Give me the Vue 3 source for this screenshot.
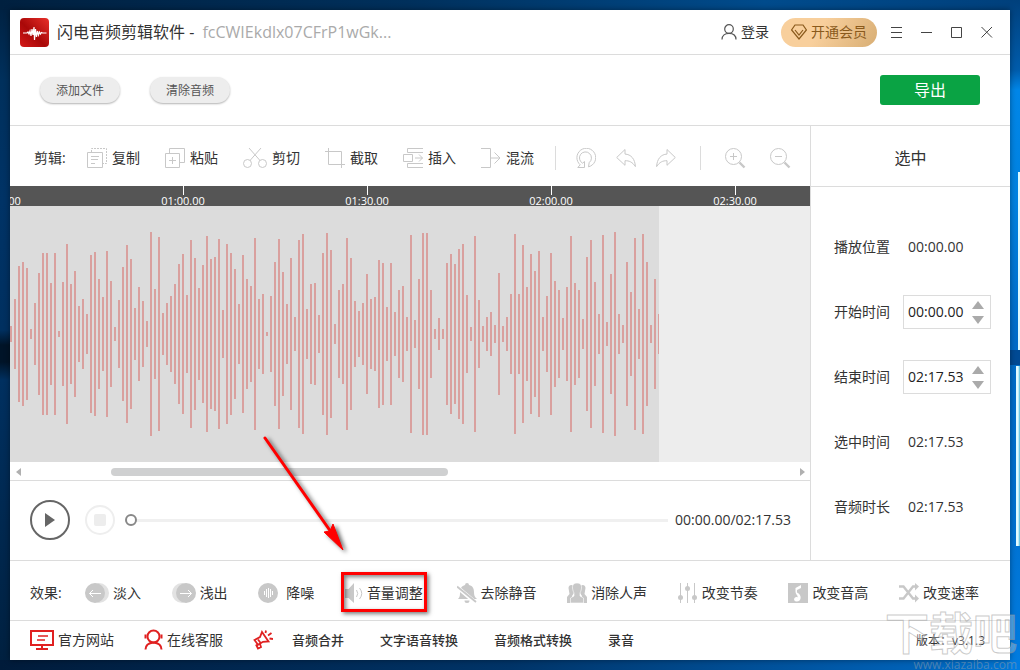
<script setup>
import { ref, computed } from 'vue';

const fileName = ref('fcCWIEkdlx07CFrP1wGk...');
const startTime = ref('00:00.00');
const endTime = ref('02:17.53');
const duration = ref('02:17.53');
const position = ref('00:00.00');
const progress = ref(0);

// edit tools
const editTools = [
  {
    label: '复制', width: 20,
    icon: '<path d="M.5 4.5h15v15H.5zM4 8.5h8M4 11.5h7M4 15.5h4"/><path stroke-dasharray="2 1" d="M4.5 4V.5h15v15H16"/>',
  },
  {
    label: '粘贴', width: 20,
    icon: '<path d="M.5 5.5h14v14H.5zM4.5 5V.5h15v14H15M7.5 9v7M4 12.5h7"/>',
  },
  {
    label: '剪切', width: 24,
    icon: '<circle cx="4.5" cy="15.5" r="4"/><circle cx="19.5" cy="15.5" r="4"/><path d="M6 0l11 12.5M18 0L7 12.5"/>',
  },
  {
    label: '截取', width: 20,
    icon: '<path d="M0 3.5h16.5V20M3.5 0v16.5H20"/>',
  },
  {
    label: '插入', width: 20,
    icon: '<path d="M20 .5H4.5v4H20M20 19.5H4.5v-4H20M.5 6.5h9v7h-9zM12 10h7.5M16 6.5l3.5 3.5-3.5 3.5"/>',
  },
  {
    label: '混流', width: 20,
    icon: '<path d="M0 .5h9.5v19H0M9.5 10H19M13.5 4.5L19 10l-5.5 5.5"/>',
  },
];

const historyTools = [
  { label: '还原', icon: '<path d="M12.5 18.8A9.4 9.4 0 1 0 4.2 16.8L1.8 19.5H8.5V13.5L6.6 15.2A6 6 0 1 1 13.2 14.6z"/>' },
  { label: '撤销', icon: '<path d="M.7 9.5L9 1.5v4.6C15 6.3 19 11 19.4 18.6 16.5 14 13 12.6 9 12.7v4.6z"/>' },
  { label: '重做', icon: '<path d="M19.3 9.5L11 1.5v4.6C5 6.3 1 11 .6 18.6 3.5 14 7 12.6 11 12.7v4.6z"/>' },
];

const zoomTools = [
  { label: '放大', icon: '<circle cx="8.5" cy="8.5" r="8"/><path d="M8.5 5v7M5 8.5h7"/><path stroke-width="2.4" d="M14.5 14.5l5 5"/>' },
  { label: '缩小', icon: '<circle cx="8.5" cy="8.5" r="8"/><path d="M5 8.5h7"/><path stroke-width="2.4" d="M14.5 14.5l5 5"/>' },
];

// effects
const effects = [
  {
    label: '淡入', width: 24,
    icon: '<circle cx="14" cy="10" r="10" fill="#e2e2e2"/><circle cx="10" cy="10" r="10"/><path d="M16 10.5H4.5M8 7l-3.5 3.5L8 14" fill="none" stroke="#fff"/>',
  },
  {
    label: '浅出', width: 24,
    icon: '<circle cx="10" cy="10" r="10" fill="#e2e2e2"/><circle cx="14" cy="10" r="10"/><path d="M8 10.5h11.5M16 7l3.5 3.5L16 14" fill="none" stroke="#fff"/>',
  },
  {
    label: '降噪', width: 24,
    icon: '<circle cx="10" cy="10" r="10"/><path d="M6.5 8v4M8.5 6v8M10.5 5v10M12.5 6v8M14.5 8v4" stroke="#fff"/>',
  },
  {
    label: '音量调整', width: 18, marked: true,
    icon: '<path d="M0 6h3.5L9 0v20l-5.5-5H0z"/><path d="M11.5 7q2.5 3.500 0 7M14.500 5q4.500 5.500 0 11" fill="none" stroke="#c8c8c8"/>',
  },
  {
    label: '去除静音', width: 20,
    icon: '<path d="M10 0a2 2 0 0 1 2 2c4 1 5 4 5 7 0 4 1 5 3 7H1c2-2 2-4 2-7 0-4 2-6 5-7a2 2 0 0 1 2-2zM7.500 17.500h5a2.500 2.500 0 0 1-5 0z"/><path d="M0 4l19 16" stroke="#fff" stroke-width="4"/><path d="M0 3.500L19 19" stroke="#c8c8c8" stroke-width="1.800"/>',
  },
  {
    label: '消除人声', width: 20,
    icon: '<path d="M1.500 5c0-4 5.500-4 5.500 0v5l-2 3v7H0v-6l2.500-3zM18.500 5c0-4-5.500-4-5.500 0v5l2 3v7h5v-6l-2.500-3z"/><path d="M10 0c6 0 5 6 3 10v3l3.500 2v5h-13v-5L7 13v-3C5 6 4 0 10 0z" stroke="#fff" stroke-width=".6"/>',
  },
  {
    label: '改变节奏', width: 20,
    icon: '<path d="M2.500 0v20M9.500 0v20M16.500 0v20" stroke="#c8c8c8"/><circle cx="2.500" cy="14.500" r="2.500"/><circle cx="9.500" cy="5.500" r="2.500"/><circle cx="16.500" cy="14.500" r="2.500"/>',
  },
  {
    label: '改变音高', width: 20,
    icon: '<path d="M0 0h20v20H0z"/><path d="M7.500 5l5.500-3v3l-4 2v2.500c5 2 5 9-.5 9-3.500 0-3-5 .500-4.500l.5.500c1-2-2-3-2-6z" fill="#fff"/>',
  },
  {
    label: '改变速率', width: 20,
    icon: '<path d="M0 3.500h4.500L14 15.500h3M0 15.500h4.500L14 3.500h3" fill="none" stroke="#c8c8c8" stroke-width="2.400"/><path d="M16 0l4 3.500L16 7.500zM16 11.500l4 4-4 4z"/>',
  },
];

const links = ['音频合并', '文字语音转换', '音频格式转换', '录音'];

const marks = ['00:30.00', '01:00.00', '01:30.00', '02:00.00', '02:30.00'];

// 波形半高
const peaks = [
  8, 35, 68, 72, 66, 5, 31, 61, 81, 81, 51, 81, 3, 52, 90, 50, 63, 28, 35, 20, 79, 82, 55, 37, 83, 53, 7, 34,
  67, 89, 75, 26, 47, 33, 13, 102, 45, 97, 21, 31, 38, 50, 70, 80, 39, 94, 76, 46, 69, 98, 75, 77, 95, 24, 90,
  81, 65, 30, 79, 55, 48, 96, 35, 40, 2, 38, 72, 95, 62, 30, 76, 17, 94, 100, 25, 50, 51, 19, 81, 101, 84, 10,
  44, 50, 96, 76, 33, 23, 31, 60, 35, 37, 74, 71, 27, 71, 22, 44, 48, 17, 99, 14, 55, 101, 101, 44, 5, 16, 5,
  71, 80, 70, 85, 90, 39, 7, 98, 34, 8, 17, 22, 9, 61, 8, 17, 40, 100, 40, 89, 47, 80, 63, 83, 17, 38, 81, 53,
  44, 16, 47, 98, 51, 44, 15, 77, 94, 52, 20, 99, 12, 60, 102, 20, 9, 72, 42, 96, 25, 100, 72, 9, 55, 20,
];

const bars = computed(() => peaks.map((h, i) => ({ x: i * 4, y: 128 - h, h: h * 2 })));
</script>

<template>
  <div class="desktop">
    <div class="window">
      <!-- title bar -->
      <header class="titlebar">
        <svg class="logo" viewBox="0 0 29 29">
          <defs>
            <linearGradient id="logoFill" x1="1" y1="0" x2="0" y2="1">
              <stop offset="0" stop-color="#e8302a" />
              <stop offset=".55" stop-color="#a90808" />
              <stop offset="1" stop-color="#d51a18" />
            </linearGradient>
          </defs>
          <rect width="29" height="29" rx="4" fill="url(#logoFill)" />
          <path
            d="M3 15h4l1-1 1 2 1-3 1 5 1-7 1 6 1-8 .5 13 1-11 1 8 1-6 1 4 1-3 1 2 1-1.500 1 .5h4"
            fill="none" stroke="#fff" stroke-width="1.200"
          />
        </svg>
        <h1>闪电音频剪辑软件 - <span>{{ fileName }}</span></h1>
        <button class="login">
          <svg width="16" height="16" viewBox="0 0 16 16" fill="none" stroke="#555" stroke-width="1.2">
            <circle cx="8" cy="5" r="4.300" />
            <path d="M1 15.500c0-4 3-6.200 7-6.200s7 2.200 7 6.200" />
          </svg>
          登录
        </button>
        <button class="vip">
          <svg width="16" height="16" viewBox="0 0 16 16" fill="none" stroke="#8a5a1c" stroke-width="1.2">
            <path d="M4 1h8l3.400 5L8 15 .600 6zM4 6l4 5 4-5" />
          </svg>
          开通会员
        </button>
        <button class="win-btn" aria-label="菜单">
          <svg width="12" height="12" viewBox="0 0 12 12"><path d="M0 1.500h11M0 6.500h11M0 11.500h11" /></svg>
        </button>
        <button class="win-btn" aria-label="最小化">
          <svg width="12" height="12" viewBox="0 0 12 12"><path d="M0 6.500h11" /></svg>
        </button>
        <button class="win-btn" aria-label="最大化">
          <svg width="12" height="12" viewBox="0 0 12 12"><path d="M.5 1.500h10v10H.5z" /></svg>
        </button>
        <button class="win-btn" aria-label="关闭">
          <svg width="12" height="12" viewBox="0 0 12 12"><path d="M.5 1l10.500 10.500M11 1L.5 11.500" /></svg>
        </button>
      </header>

      <!-- file actions -->
      <div class="filebar">
        <button class="pill">添加文件</button>
        <button class="pill">清除音频</button>
        <button class="export">导出</button>
      </div>

      <div class="workspace">
        <main class="editor">
          <div class="toolbar">
            <span class="caption">剪辑:</span>
            <div class="tools">
              <button v-for="tool in editTools" :key="tool.label" class="tool">
                <svg class="line-icon" :width="tool.width" height="20" v-html="tool.icon"></svg>
                {{ tool.label }}
              </button>
            </div>
            <div class="tools icons-only">
              <button v-for="tool in historyTools" :key="tool.label" class="tool" :aria-label="tool.label">
                <svg class="line-icon" width="20" height="20" v-html="tool.icon"></svg>
              </button>
            </div>
            <div class="tools icons-only zooms">
              <button v-for="tool in zoomTools" :key="tool.label" class="tool" :aria-label="tool.label">
                <svg class="line-icon" width="21" height="21" v-html="tool.icon"></svg>
              </button>
            </div>
          </div>

          <div class="ruler">
            <span v-for="mark in marks" :key="mark" class="mark">{{ mark }}</span>
          </div>

          <div class="track">
            <svg class="wave" viewBox="0 0 649 256" preserveAspectRatio="none">
              <rect v-for="bar in bars" :key="bar.x" :x="bar.x" :y="bar.y" width="2" :height="bar.h" />
            </svg>
          </div>

          <div class="scrollbar">
            <button aria-label="向左滚动">
              <svg width="5" height="8" viewBox="0 0 5 8"><path d="M5 0v8L0 4z" /></svg>
            </button>
            <div class="rail"><div class="thumb"></div></div>
            <button aria-label="向右滚动">
              <svg width="5" height="8" viewBox="0 0 5 8"><path d="M0 0v8l5-4z" /></svg>
            </button>
          </div>

          <div class="player">
            <button class="play" aria-label="播放">
              <svg width="12" height="16" viewBox="0 0 12 16"><path d="M1 1v14l10-7z" /></svg>
            </button>
            <button class="stop" aria-label="停止"><span></span></button>
            <input v-model="progress" class="progress" type="range" min="0" max="100" aria-label="播放进度" />
            <span class="clock">{{ position }}/{{ duration }}</span>
          </div>
        </main>

        <!-- selection panel -->
        <aside class="side">
          <h2>选中</h2>
          <div class="fields">
            <div class="field">
              <span>播放位置</span>
              <output>{{ position }}</output>
            </div>
            <div class="field">
              <label for="start">开始时间</label>
              <div class="spin">
                <input id="start" v-model="startTime" type="text" />
                <div class="arrows">
                  <button aria-label="增加开始时间"><svg width="12" height="8"><path d="M0 8h12L6 0z" /></svg></button>
                  <button aria-label="减少开始时间"><svg width="12" height="8"><path d="M0 0h12L6 8z" /></svg></button>
                </div>
              </div>
            </div>
            <div class="field">
              <label for="end">结束时间</label>
              <div class="spin">
                <input id="end" v-model="endTime" type="text" />
                <div class="arrows">
                  <button aria-label="增加结束时间"><svg width="12" height="8"><path d="M0 8h12L6 0z" /></svg></button>
                  <button aria-label="减少结束时间"><svg width="12" height="8"><path d="M0 0h12L6 8z" /></svg></button>
                </div>
              </div>
            </div>
            <div class="field">
              <span>选中时间</span>
              <output>{{ endTime }}</output>
            </div>
            <div class="field">
              <span>音频时长</span>
              <output>{{ duration }}</output>
            </div>
          </div>
        </aside>
      </div>

      <!-- effects -->
      <div class="effects">
        <span class="caption">效果:</span>
        <div class="effect-list">
          <button v-for="item in effects" :key="item.label" class="effect" :class="{ marked: item.marked }">
            <svg class="solid-icon" :width="item.width" height="20" v-html="item.icon"></svg>
            {{ item.label }}
            <svg v-if="item.marked" class="pointer" width="94" height="128" viewBox="0 0 94 128">
              <path d="M4 5l66 94" fill="none" stroke="#f00" stroke-width="3" stroke-linecap="round" />
              <path d="M82 117L63 99l6-1 3-7z" fill="#f00" stroke="#f00" stroke-width="1" />
            </svg>
          </button>
        </div>
      </div>

      <footer class="footer">
        <a href="#">
          <svg width="24" height="20" viewBox="0 0 24 20" fill="none" stroke="#e02020" stroke-width="2">
            <path d="M1 1h22v14H1zM12 15v4M6 19h12" />
            <path d="M8 6h10M7 10h8" stroke-width="1.500" />
          </svg>
          官方网站
        </a>
        <a href="#">
          <svg width="19" height="21" viewBox="0 0 19 21" fill="none" stroke="#e02020" stroke-width="2">
            <circle cx="9.500" cy="7.500" r="6" />
            <path d="M1.500 5.500v4M17.500 5.500v4M1.500 20.500c0-4 3-6.500 8-7 5 .5 8 3 8 7" />
          </svg>
          在线客服
        </a>
        <a href="#" class="horn" aria-label="公告">
          <svg width="20" height="20" viewBox="0 0 20 20" fill="none" stroke="#e02020" stroke-width="1.800">
            <path d="M9 2l6.500 9.500-5.500.3-5 3-3.500-4.800L7 7zM5 9.500l3 4M3 14.500l2 4 3-1.500-1-3" />
            <path d="M12.500 3L13 .5M15 5.500L18.500 3M16.500 8.500l3.500.5" />
          </svg>
        </a>
        <nav>
          <a v-for="link in links" :key="link" href="#">{{ link }}</a>
        </nav>
        <span class="version">版本：v3.1.3</span>
      </footer>
    </div>

    <div class="watermark">
      <strong>下载吧</strong>
      <span>www.xiazaiba.com</span>
    </div>
  </div>
</template>

<style>
body {
  background: #002a52;
}
</style>

<style scoped>
.desktop {
  position: relative;
  display: flex;
  box-sizing: border-box;
  min-height: 100vh;
  padding: 10px;
  overflow: hidden;
  color: #333;
  font-family: "Open Sans", "Noto Sans CJK SC", sans-serif;
  font-size: 14px;
  line-height: 20px;
  background:
    linear-gradient(#dcfaff, #dcfaff) right 172px / 2px 178px no-repeat,
    linear-gradient(#004a94, #004a94) right 350px / 10px 15px no-repeat,
    linear-gradient(90deg, #e4fcff 50%, #48b8dc) right 366px / 4px 180px no-repeat,
    linear-gradient(#00407c, #005cab 70px, #0086e8 90px, #0082e0 200px, #006cc8 340px, #0071d0 500px, #007ce0) right top / 10px 100% no-repeat,
    linear-gradient(90deg, #001b3a, #003468 50%, #0062b8 90%, #0078d8) left bottom / 100% 10px no-repeat,
    linear-gradient(90deg, #00203f, #00305c 40%, #004b8c 75%, #00407c) left top / 100% 10px no-repeat,
    linear-gradient(#00203f, #00305c 80px, #003366 200px, #003060 330px, #001428 345px, #001428 362px, #003060 380px, #00203f 670px);
}

.window {
  position: relative;
  display: flex;
  flex: 1;
  flex-direction: column;
  min-width: 0;
  background: #fff;
  box-shadow: 0 0 6px rgba(0, 0, 0, 0.4);
}

button {
  padding: 0;
  border: none;
  background: none;
  color: inherit;
  font: inherit;
  white-space: nowrap;
  cursor: pointer;
}

svg {
  flex: none;
}

a {
  color: inherit;
  text-decoration: none;
}

/* title bar */
.titlebar {
  display: flex;
  align-items: center;
  height: 44px;
  padding: 0 8px 0 10px;
  border-bottom: 1px solid #dcdcdc;
}

.logo {
  width: 29px;
  height: 29px;
}

.titlebar h1 {
  flex: 1;
  margin: 0 0 0 8px;
  font-size: 16px;
  font-weight: 400;
}

.titlebar h1 span {
  margin-left: 4px;
  color: #aaa;
}

.login {
  display: flex;
  align-items: center;
  gap: 4px;
  margin-right: 12px;
}

.vip {
  display: flex;
  align-items: center;
  justify-content: center;
  gap: 4px;
  width: 96px;
  height: 29px;
  margin-right: 5px;
  border-radius: 15px;
  background: linear-gradient(120deg, #f8cf9c 40%, #d8ae74);
  color: #8a5a1c;
}

.win-btn {
  display: flex;
  align-items: center;
  justify-content: center;
  width: 30px;
  height: 30px;
}

.win-btn svg {
  fill: none;
  stroke: #444;
}

/* file bar */
.filebar {
  display: flex;
  align-items: center;
  gap: 30px;
  height: 70px;
  padding: 0 30px;
  border-bottom: 1px solid #dcdcdc;
}

.pill {
  width: 80px;
  height: 26px;
  padding-top: 1px;
  border-radius: 13px;
  background: #ededed;
  box-shadow: 0 1px 2px rgba(0, 0, 0, 0.3);
  color: #555;
  font-size: 12px;
}

.export {
  width: 100px;
  height: 30px;
  margin-left: auto;
  border-radius: 3px;
  background: #0aa344;
  color: #fff;
  font-size: 16px;
}

/* workspace */
.workspace {
  display: flex;
  flex: 1;
  border-bottom: 1px solid #dcdcdc;
}

.editor {
  display: flex;
  flex: 1;
  flex-direction: column;
  min-width: 0;
}

.toolbar {
  display: flex;
  align-items: center;
  box-sizing: border-box;
  height: 60px;
  padding: 4px 0 0 24px;
}

.caption {
  flex: none;
  width: 32px;
  white-space: nowrap;
}

.tools {
  display: flex;
  align-items: center;
  gap: 25px;
  margin-left: 21px;
}

.tool {
  display: flex;
  align-items: center;
  gap: 5px;
}

.line-icon {
  fill: none;
  stroke: #c8c8c8;
}

.icons-only {
  gap: 20px;
  height: 24px;
  padding-left: 20px;
  border-left: 1px solid #dcdcdc;
}

.zooms {
  gap: 24px;
  padding-left: 24px;
  margin-left: 24px;
}

.ruler {
  display: flex;
  height: 20px;
  overflow: hidden;
  background: #555;
  color: #fff;
}

.mark {
  display: flex;
  flex: none;
  flex-direction: column;
  align-items: center;
  width: 184px;
  font-size: 11px;
  line-height: 11px;
}

.mark:first-child {
  margin-left: -103px;
}

.mark::before {
  flex: none;
  width: 1px;
  height: 9px;
  background: #fff;
  content: "";
}

.track {
  display: flex;
  flex: 1;
  height: 256px;
  background: #ededed;
}

.wave {
  width: 81.125%;
  height: 100%;
  background: #dcdcdc;
  fill: #d9a09e;
}

.scrollbar {
  display: flex;
  align-items: center;
  box-sizing: border-box;
  height: 19px;
  padding: 2px 5px 0 6px;
  border-bottom: 1px solid #dcdcdc;
}

.scrollbar button {
  display: flex;
  fill: #b0b0b0;
}

.rail {
  flex: 1;
  padding: 0 6px;
}

.thumb {
  width: 44%;
  height: 8px;
  margin-left: 84px;
  border-radius: 4px;
  background: #cfd0d1;
}

.player {
  display: flex;
  align-items: center;
  box-sizing: border-box;
  height: 79px;
  padding: 0 19px 1px 20px;
}

.play,
.stop {
  display: flex;
  flex: none;
  align-items: center;
  justify-content: center;
  box-sizing: border-box;
  border-radius: 50%;
}

.play {
  width: 40px;
  height: 40px;
  border: 2px solid #666;
  fill: #666;
}

.stop {
  width: 30px;
  height: 30px;
  margin: 0 10px 0 15px;
  border: 2px solid #eee;
}

.stop span {
  width: 12px;
  height: 12px;
  border-radius: 2px;
  background: #ededed;
}

.progress {
  flex: 1;
  min-width: 0;
  height: 12px;
  margin: 0 7px 0 0;
  appearance: none;
  background: linear-gradient(#f0f0f0, #f0f0f0) center / 100% 3px no-repeat;
}

.progress::-webkit-slider-thumb {
  box-sizing: border-box;
  width: 12px;
  height: 12px;
  border: 2px solid #888;
  border-radius: 50%;
  appearance: none;
  background: #fff;
}

/* selection panel */
.side {
  width: 199px;
  border-left: 1px solid #dcdcdc;
}

.side h2 {
  box-sizing: border-box;
  height: 61px;
  margin: 0;
  padding-top: 22px;
  border-bottom: 1px solid #dcdcdc;
  font-size: 16px;
  font-weight: 400;
  text-align: center;
}

.fields {
  display: flex;
  flex-direction: column;
  gap: 31px;
  padding: 43px 19px 0 23px;
}

.field {
  display: flex;
  align-items: center;
  gap: 13px;
  height: 34px;
}

.field output {
  padding-left: 5px;
}

.spin {
  display: flex;
  flex: 1;
  align-items: center;
  box-sizing: border-box;
  height: 34px;
  min-width: 0;
  padding: 0 6px 0 4px;
  border: 1px solid #dcdcdc;
}

.spin input {
  flex: 1;
  min-width: 0;
  padding: 0;
  border: none;
  outline: none;
  background: none;
  color: #222;
  font: inherit;
}

.arrows {
  display: flex;
  flex-direction: column;
  gap: 7px;
}

.arrows button {
  display: flex;
  fill: #aaa;
}

/* effects */
.effects {
  display: flex;
  align-items: center;
  box-sizing: border-box;
  height: 60px;
  padding: 4px 31px 0 20px;
  border-bottom: 1px solid #dcdcdc;
}

.effect-list {
  display: flex;
  flex: 1;
  justify-content: space-between;
  margin-left: 23px;
}

.effect {
  position: relative;
  display: flex;
  align-items: center;
  gap: 4px;
}

.marked {
  margin-right: 3px;
}

.solid-icon {
  fill: #c8c8c8;
}

.marked::after {
  position: absolute;
  inset: -11px -4px -9px;
  border: 3px solid #f00;
  box-shadow: 2px 2px 4px rgba(0, 0, 0, 0.5), inset 2px 2px 4px rgba(0, 0, 0, 0.5);
  content: "";
}

.pointer {
  position: absolute;
  right: 68px;
  bottom: 42px;
  filter: drop-shadow(3px 2px 2px rgba(0, 0, 0, 0.6));
  pointer-events: none;
}

/* footer */
.footer {
  display: flex;
  align-items: center;
  box-sizing: border-box;
  height: 39px;
  padding: 0 25px 2px 20px;
}

.footer > a {
  display: flex;
  align-items: center;
  gap: 4px;
  margin-right: 30px;
}

.footer > .horn {
  margin-right: 19px;
}

.footer nav {
  display: flex;
  flex: 1;
  gap: 36px;
  font-size: 13px;
  font-weight: 500;
}

.version {
  padding-top: 2px;
  font-size: 12px;
}

.watermark {
  position: absolute;
  right: 3px;
  bottom: -3px;
  display: flex;
  flex-direction: column;
  align-items: flex-end;
  color: rgba(150, 160, 170, 0.5);
  pointer-events: none;
}

.watermark strong {
  color: rgba(255, 255, 255, 0.3);
  font-size: 44px;
  line-height: 48px;
  -webkit-text-stroke: 1px rgba(150, 150, 150, 0.5);
}

.watermark span {
  font-size: 12px;
  line-height: 16px;
}
</style>
